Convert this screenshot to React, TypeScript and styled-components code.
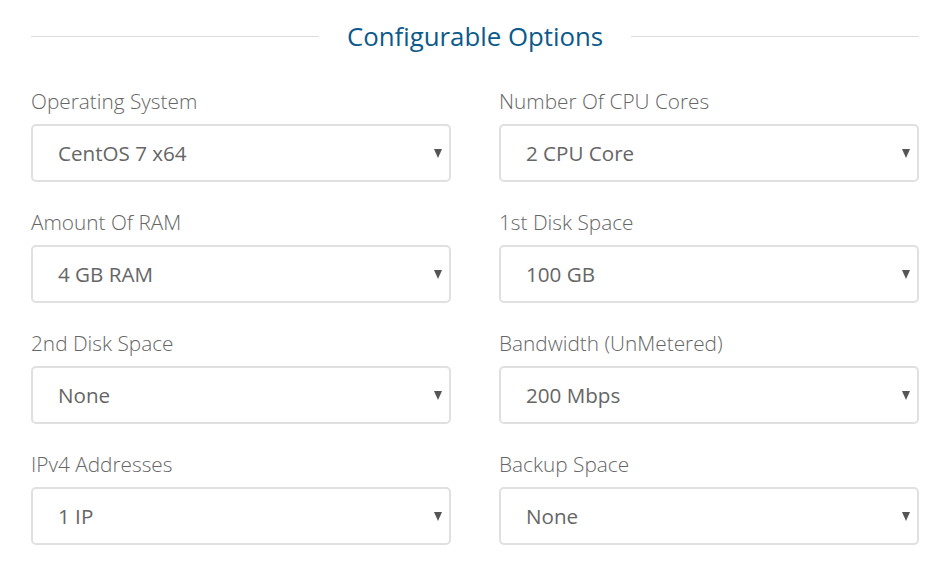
import React from "react";
import styled, { createGlobalStyle } from "styled-components";

const Global = createGlobalStyle`
  html, body { margin: 0; padding: 0; background: #fff; }
  body { font-family: "Open Sans", "Liberation Sans", sans-serif; }
`;

const Page = styled.div`
  width: 888px;
  padding: 18px 25px 0 31px;
`;

const Header = styled.div`
  display: flex;
  align-items: center;
  gap: 28px;
  height: 36px;
  margin-bottom: 33px;
`;

const Rule = styled.div`
  flex: 1;
  height: 1px;
  background: #dcdcdc;
  margin-top: 1px;
`;

const Title = styled.h2`
  margin: 0;
  font-size: 25.8px;
  font-weight: 400;
  color: #0b5a8b;
  line-height: 36px;
  white-space: nowrap;
`;

const Grid = styled.div`
  display: grid;
  grid-template-columns: 420px 420px;
  column-gap: 48px;
  row-gap: 26px;
`;

const Field = styled.div`
  display: flex;
  flex-direction: column;
  gap: 9px;
`;

const Label = styled.label`
  font-size: 20.8px;
  font-weight: 300;
  color: #666;
  line-height: 28px;
`;

const SelectWrap = styled.div`
  position: relative;
`;

const Select = styled.select`
  appearance: none;
  -webkit-appearance: none;
  width: 100%;
  height: 58px;
  box-sizing: border-box;
  border: 2px solid #e0e0e0;
  border-radius: 5px;
  background: #fff;
  padding: 0 30px 0 25px;
  font-family: "Open Sans", "Liberation Sans", sans-serif;
  font-size: 20.6px;
  color: #666;
  outline: none;
`;

const Arrow = styled.svg`
  position: absolute;
  right: 9px;
  top: 50%;
  margin-top: -4px;
  pointer-events: none;
`;

const fields: { label: string; value: string }[] = [
  { label: "Operating System", value: "CentOS 7 x64" },
  { label: "Number Of CPU Cores", value: "2 CPU Core" },
  { label: "Amount Of RAM", value: "4 GB RAM" },
  { label: "1st Disk Space", value: "100 GB" },
  { label: "2nd Disk Space", value: "None" },
  { label: "Bandwidth (UnMetered)", value: "200 Mbps" },
  { label: "IPv4 Addresses", value: "1 IP" },
  { label: "Backup Space", value: "None" },
];

export default function App() {
  return (
    <>
      <Global />
      <Page>
        <Header>
          <Rule />
          <Title>Configurable Options</Title>
          <Rule />
        </Header>
        <Grid>
          {fields.map((f) => (
            <Field key={f.label}>
              <Label>{f.label}</Label>
              <SelectWrap>
                <Select defaultValue={f.value}>
                  <option>{f.value}</option>
                </Select>
                <Arrow width="8" height="9" viewBox="0 0 8 9">
                  <path d="M0 0 H8 L4 9 Z" fill="#555" />
                </Arrow>
              </SelectWrap>
            </Field>
          ))}
        </Grid>
      </Page>
    </>
  );
}
